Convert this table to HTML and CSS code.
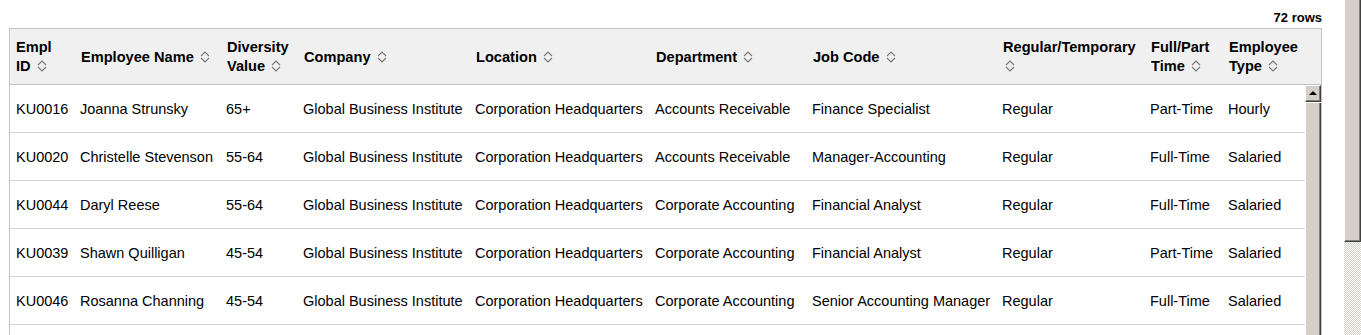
FILE: index.html
```html
<!DOCTYPE html>
<html>
<head>
<meta charset="utf-8">
<link rel="stylesheet" href="styles.css">
</head>
<body>
<div class="page">
  <div class="main">
    <div class="toolbar"><span class="count">72 rows</span></div>
    <div class="grid">
      <table class="head">
        <colgroup>
          <col style="width:64px"><col style="width:146px"><col style="width:77px"><col style="width:172px"><col style="width:180px"><col style="width:157px"><col style="width:190px"><col style="width:148px"><col style="width:78px"><col style="width:99px">
        </colgroup>
        <tr>
          <th>Empl<br>ID <i class="sort"></i></th>
          <th>Employee Name <i class="sort"></i></th>
          <th>Diversity<br>Value <i class="sort"></i></th>
          <th>Company <i class="sort"></i></th>
          <th>Location <i class="sort"></i></th>
          <th>Department <i class="sort"></i></th>
          <th>Job Code <i class="sort"></i></th>
          <th>Regular/Temporary<br><i class="sort"></i></th>
          <th>Full/Part<br>Time <i class="sort"></i></th>
          <th>Employee<br>Type <i class="sort"></i></th>
        </tr>
      </table>
      <div class="body">
        <table class="rows">
          <colgroup>
            <col style="width:64px"><col style="width:146px"><col style="width:77px"><col style="width:172px"><col style="width:180px"><col style="width:157px"><col style="width:190px"><col style="width:148px"><col style="width:78px"><col style="width:83px">
          </colgroup>
          <tr><td>KU0016</td><td>Joanna Strunsky</td><td>65+</td><td>Global Business Institute</td><td>Corporation Headquarters</td><td>Accounts Receivable</td><td>Finance Specialist</td><td>Regular</td><td>Part-Time</td><td>Hourly</td></tr>
          <tr><td>KU0020</td><td>Christelle Stevenson</td><td>55-64</td><td>Global Business Institute</td><td>Corporation Headquarters</td><td>Accounts Receivable</td><td>Manager-Accounting</td><td>Regular</td><td>Full-Time</td><td>Salaried</td></tr>
          <tr><td>KU0044</td><td>Daryl Reese</td><td>55-64</td><td>Global Business Institute</td><td>Corporation Headquarters</td><td>Corporate Accounting</td><td>Financial Analyst</td><td>Regular</td><td>Full-Time</td><td>Salaried</td></tr>
          <tr><td>KU0039</td><td>Shawn Quilligan</td><td>45-54</td><td>Global Business Institute</td><td>Corporation Headquarters</td><td>Corporate Accounting</td><td>Financial Analyst</td><td>Regular</td><td>Part-Time</td><td>Salaried</td></tr>
          <tr><td>KU0046</td><td>Rosanna Channing</td><td>45-54</td><td>Global Business Institute</td><td>Corporation Headquarters</td><td>Corporate Accounting</td><td>Senior Accounting Manager</td><td>Regular</td><td>Full-Time</td><td>Salaried</td></tr>
          <tr class="partial"><td></td><td></td><td></td><td></td><td></td><td></td><td></td><td></td><td></td><td></td></tr>
        </table>
        <div class="vscroll">
          <div class="btn"><span class="up"></span></div>
          <div class="thumb"></div>
        </div>
      </div>
    </div>
  </div>
  <div class="pagescroll">
    <div class="pthumb"></div>
    <div class="ptrack"></div>
  </div>
</div>
</body>
</html>
```

FILE: styles.css
```css
html, body {
  margin: 0;
  height: 335px;
  overflow: hidden;
  background: #fff;
}
body {
  font-family: "Liberation Sans", Arial, sans-serif;
  color: #000;
}
.page {
  display: flex;
  height: 335px;
}
.main {
  width: 1313px;
  padding: 0 21px 0 9px;
  display: flex;
  flex-direction: column;
  overflow: hidden;
}
.toolbar {
  height: 28px;
  display: flex;
  justify-content: flex-end;
  align-items: flex-end;
  box-sizing: border-box;
  padding-bottom: 3px;
}
.count {
  font-size: 13px;
  font-weight: bold;
  line-height: 15px;
}
.grid {
  border: 1px solid #c4c4c4;
  border-bottom: none;
  flex: 1;
  overflow: hidden;
}
table {
  border-collapse: collapse;
  table-layout: fixed;
}
.head {
  width: 1311px;
  background: #f0f0f0;
  border-bottom: 1px solid #c4c4c4;
}
th {
  height: 55px;
  padding: 2px 0 0 7px;
  text-align: left;
  font-size: 14.6px;
  line-height: 19px;
  font-weight: bold;
  vertical-align: middle;
  white-space: nowrap;
  box-sizing: border-box;
}
th:first-child { padding-left: 6px; }
.sort {
  display: inline-block;
  width: 10px;
  height: 12px;
  margin-left: 2px;
  vertical-align: -1px;
  background: url("data:image/svg+xml;utf8,<svg xmlns='http://www.w3.org/2000/svg' width='10' height='12' viewBox='0 0 10 12'><polyline points='1,5 5,1 9,5' fill='none' stroke='%23777' stroke-width='1.1'/><polyline points='1,7 5,11 9,7' fill='none' stroke='%23777' stroke-width='1.1'/></svg>") no-repeat;
}
.body {
  display: flex;
  align-items: flex-start;
}
.rows {
  width: 1295px;
  flex: none;
}
td {
  height: 45px;
  padding: 2px 0 0 6px;
  font-size: 14.5px;
  line-height: 17px;
  border-bottom: 1px solid #d4d4d4;
  white-space: nowrap;
  vertical-align: middle;
  box-sizing: content-box;
}
.vscroll {
  width: 16px;
  flex: none;
  display: flex;
  flex-direction: column;
  height: 260px;
}
.btn {
  height: 17px;
  box-sizing: border-box;
  background: #d4d0c8;
  border-top: 1px solid #fff;
  border-left: 1px solid #fff;
  border-right: 1px solid #404040;
  border-bottom: 1px solid #404040;
  box-shadow: inset -1px -1px 0 #808080;
  display: flex;
  align-items: center;
  justify-content: center;
}
.up {
  width: 0;
  height: 0;
  border-left: 4px solid transparent;
  border-right: 4px solid transparent;
  border-bottom: 4px solid #000;
  margin-top: -1px;
}
.thumb {
  flex: 1;
  margin-top: 1px;
  background: #d4d0c8;
  border-left: 1px solid #fff;
  border-right: 1px solid #404040;
  box-shadow: inset -1px 0 0 #808080;
}
.pagescroll {
  width: 18px;
  display: flex;
  flex-direction: column;
  padding-left: 1px;
  box-sizing: border-box;
}
.pthumb {
  height: 242px;
  box-sizing: border-box;
  background: #d4d0c8;
  border-left: 1px solid #fff;
  border-right: 1px solid #404040;
  border-bottom: 1px solid #404040;
  box-shadow: inset -1px -1px 0 #808080;
}
.ptrack {
  flex: 1;
  background: repeating-conic-gradient(#d4d0c8 0 25%, #fff 0 50%) 0 0 / 2px 2px;
}
```
